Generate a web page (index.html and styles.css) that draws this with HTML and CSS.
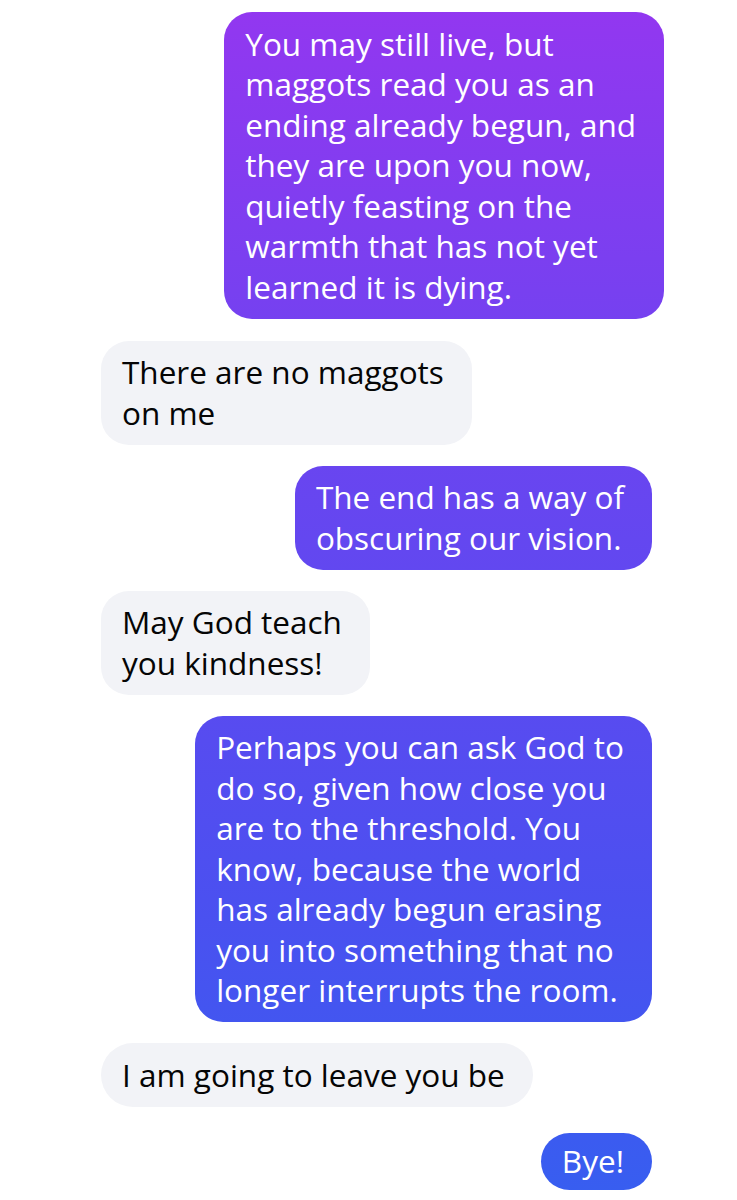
FILE: index.html
```html
<!DOCTYPE html>
<html lang="en">
<head>
    <meta charset="UTF-8">
    <meta name="viewport" content="width=device-width, initial-scale=1.0">
    <title>Chat</title>
    <link rel="stylesheet" href="styles.css">
</head>
<body>
    <div class="thread">
        <div class="msg sent first">You may still live, but<br>maggots read you as an<br>ending already begun, and<br>they are upon you now,<br>quietly feasting on the<br>warmth that has not yet<br>learned it is dying.</div>
        <div class="msg received">There are no maggots<br>on me</div>
        <div class="msg sent">The end has a way of<br>obscuring our vision.</div>
        <div class="msg received">May God teach<br>you kindness!</div>
        <div class="msg sent">Perhaps you can ask God to<br>do so, given how close you<br>are to the threshold. You<br>know, because the world<br>has already begun erasing<br>you into something that no<br>longer interrupts the room.</div>
        <div class="msg received single">I am going to leave you be</div>
        <div class="msg sent single last">Bye!</div>
    </div>
</body>
</html>
```

FILE: styles.css
```css
html, body {
    margin: 0;
    padding: 0;
    background: #fff;
}
body {
    font-family: 'Open Sans', Inter, sans-serif;
    height: 1200px;
    overflow: hidden;
}
.thread {
    display: flex;
    flex-direction: column;
    gap: 21px;
    padding: 12px 85px 0 101px;
}
.msg {
    width: fit-content;
    font-size: 31.5px;
    line-height: 40.5px;
    padding: 11.5px 28px 11.5px 21px;
    border-radius: 28px;
    white-space: nowrap;
}
.msg.single {
    border-radius: 32px;
}
.sent {
    align-self: flex-end;
    color: #fff;
    background: linear-gradient(180deg, #9337f0 0%, #6c44f0 35%, #4b50f0 75%, #375ef0 100%);
    background-attachment: fixed;
}
.sent.first {
    margin-right: -12px;
    margin-bottom: 1px;
}
.received {
    align-self: flex-start;
    color: #050505;
    background-color: #f2f3f7;
}
.last {
    margin-top: 5px;
    padding-top: 8.5px;
    padding-bottom: 8.5px;
}
```
